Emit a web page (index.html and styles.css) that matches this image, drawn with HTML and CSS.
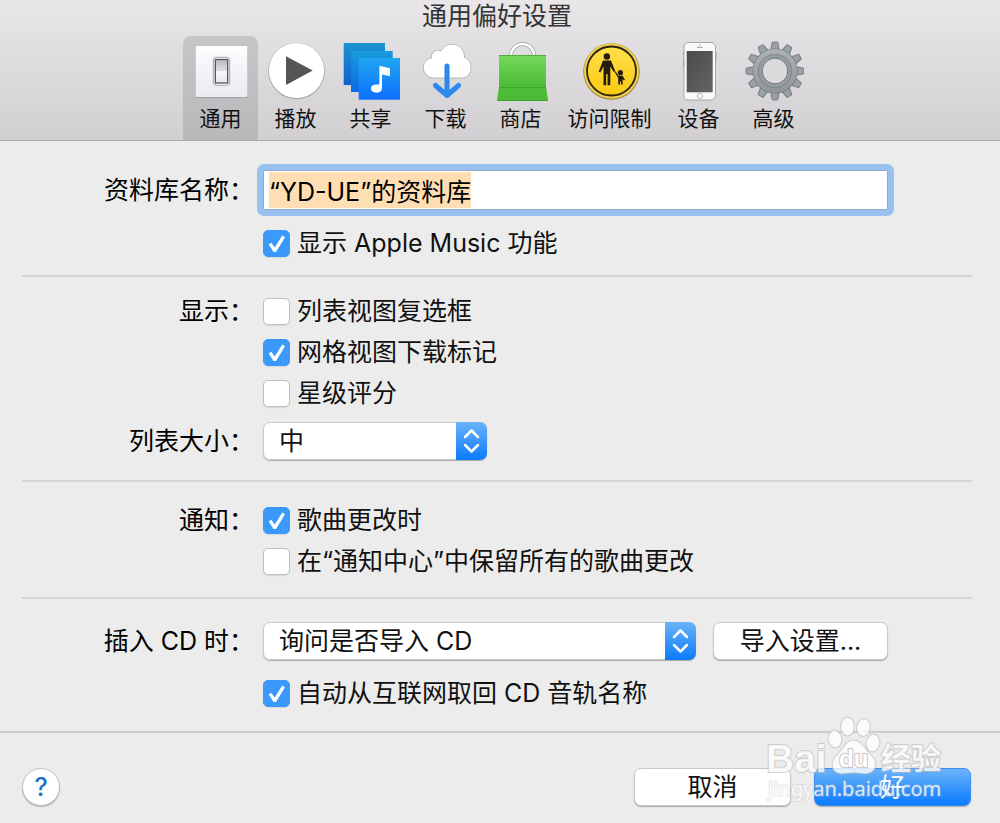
FILE: index.html
```html
<!DOCTYPE html>
<html lang="zh-CN">
<head>
<meta charset="utf-8">
<meta name="viewport" content="width=device-width, initial-scale=1">
<title>通用偏好设置</title>
<link rel="stylesheet" href="styles.css">
</head>
<body>
<header class="titlebar">
  <h1 class="title">通用偏好设置</h1>
  <nav class="tabs" aria-label="偏好设置">
    <button type="button" class="tab tab-active" aria-current="page">
      <svg class="tab-icon" viewBox="0 0 60 60" aria-hidden="true">
        <defs>
          <linearGradient id="plate" x1="0" y1="0" x2="0" y2="1"><stop offset="0" stop-color="#fdfdff"/><stop offset="1" stop-color="#e9ebf0"/></linearGradient>
          <linearGradient id="rocker" x1="0" y1="0" x2="0" y2="1"><stop offset="0" stop-color="#b9bbc1"/><stop offset=".48" stop-color="#dddee2"/><stop offset=".52" stop-color="#f8f8fa"/><stop offset="1" stop-color="#e6e7eb"/></linearGradient>
        </defs>
        <rect x="4" y="6" width="53" height="51" rx="1" fill="#8d8c90" opacity=".6"/>
        <rect x="4.500" y="5" width="52" height="51" rx="1" fill="url(#plate)"/>
        <rect x="22.300" y="16.300" width="16.400" height="28" rx="2.500" fill="#fff" stroke="#a4a5a9" stroke-width="1"/>
        <rect x="24.300" y="18.500" width="12.400" height="23.500" fill="url(#rocker)" stroke="#505156" stroke-width="1.300"/>
      </svg>
      <span>通用</span>
    </button>
    <button type="button" class="tab">
      <svg class="tab-icon" viewBox="0 0 60 60" aria-hidden="true">
        <circle cx="30.500" cy="30" r="28.300" fill="#a9a8aa"/>
        <circle cx="30.500" cy="29.500" r="27.600" fill="#fff"/>
        <path d="M20 15.200 46.700 29.600 20 44Z" fill="#555"/>
      </svg>
      <span>播放</span>
    </button>
    <button type="button" class="tab">
      <svg class="tab-icon" viewBox="0 0 60 60" aria-hidden="true">
        <defs>
          <linearGradient id="share1" x1="0" y1="0" x2="0" y2="1"><stop offset="0" stop-color="#1c93d3"/><stop offset="1" stop-color="#0e62cf"/></linearGradient>
          <linearGradient id="share2" x1="0" y1="0" x2="0" y2="1"><stop offset="0" stop-color="#1b9ade"/><stop offset="1" stop-color="#0c6be2"/></linearGradient>
          <linearGradient id="share3" x1="0" y1="0" x2="0" y2="1"><stop offset="0" stop-color="#20a6f2"/><stop offset="1" stop-color="#0d6ffb"/></linearGradient>
        </defs>
        <rect x="2.700" y="2" width="41.300" height="42" fill="url(#share1)"/>
        <rect x="10" y="10" width="41.700" height="41" fill="url(#share2)"/>
        <rect x="17.700" y="17" width="41.300" height="41.700" fill="url(#share3)"/>
        <path d="M38.400 25.300Q38.500 24.800 39.200 24.900L48 27Q49 27.200 49 28V34.200Q49 35.200 48 35L41 33.500V47C41 51 37.500 52 34.500 51.600C31.500 51.200 30 49.500 30 47.500C30 44.500 33 43.200 38.400 43.600Z" fill="#fff"/>
      </svg>
      <span>共享</span>
    </button>
    <button type="button" class="tab">
      <svg class="tab-icon" viewBox="0 0 60 60" aria-hidden="true">
        <path d="M17 37A10.500 10.500 0 0 1 7.300 27C7.300 21 11 17.500 15.500 17C14.500 11.500 20 7.800 25 10C28 5 32 3.200 36.500 3.300C44 3.500 48.500 9 48.500 16.500C52.500 18 55 21.500 55 26.500C55 33 51 37 46 37Z" fill="#fff" stroke="#aaa9ac" stroke-width=".8"/>
        <path d="M31 25V53M19.500 44.500 31 54.500 42.500 44.500" fill="none" stroke="#2d88ee" stroke-width="5" stroke-linecap="round" stroke-linejoin="round"/>
      </svg>
      <span>下载</span>
    </button>
    <button type="button" class="tab">
      <svg class="tab-icon" viewBox="0 0 60 60" aria-hidden="true">
        <defs>
          <linearGradient id="bag" x1="0" y1="0" x2="0" y2="1"><stop offset="0" stop-color="#74d95c"/><stop offset="1" stop-color="#4bbc34"/></linearGradient>
        </defs>
        <g transform="translate(1 0)">
          <path d="M19 15V14.500A11.500 11.500 0 0 1 42 14.500V15" fill="none" stroke="#9b9b9c" stroke-width="4"/>
          <path d="M19 15V14.500A11.500 11.500 0 0 1 42 14.500V15" fill="none" stroke="#fff" stroke-width="2.600"/>
          <path d="M7 14H54V46H7Z" fill="url(#bag)"/>
          <path d="M7 46H54L56 59Q56 60 55 60H6Q5 60 5 59Z" fill="#4dbb37"/>
          <path d="M7 14.500H54" stroke="#4fac3c" stroke-width="1"/>
          <path d="M7 46.500H54M5.500 59.500H55.500" stroke="#3da42b" stroke-width="1"/>
        </g>
      </svg>
      <span>商店</span>
    </button>
    <button type="button" class="tab tab-wide">
      <svg class="tab-icon" viewBox="0 0 60 60" aria-hidden="true">
        <defs>
          <linearGradient id="sign" x1="0" y1="0" x2="0" y2="1"><stop offset="0" stop-color="#ffe04a"/><stop offset="1" stop-color="#fbc911"/></linearGradient>
        </defs>
        <g transform="translate(1 0)">
          <circle cx="30.500" cy="30.500" r="28.300" fill="#a48e3c"/>
          <circle cx="30.500" cy="30" r="27.500" fill="#f0cf52"/>
          <circle cx="30.500" cy="30" r="24.500" fill="url(#sign)" stroke="#2b2412" stroke-width="1.800"/>
          <g fill="#231d10">
            <circle cx="25.900" cy="15.500" r="3.200"/>
            <path d="M22 19.500H30L34.200 30 32.800 31 29.300 25.500V44.300H26.600V33H25.200V44.300H22.500V25.500L19.300 31.500 17.700 30.800Z"/>
            <circle cx="39.400" cy="31.700" r="2.600"/>
            <path d="M34.400 30.200 37.500 34.700H41.600L44 38.800 43 39.400 41.600 38V43.500H39.900V40.500H38.900V43.500H37.200V37L33.600 31Z"/>
          </g>
        </g>
      </svg>
      <span>访问限制</span>
    </button>
    <button type="button" class="tab">
      <svg class="tab-icon" viewBox="0 0 60 60" aria-hidden="true">
        <defs>
          <linearGradient id="screen" x1="0" y1="0" x2="1" y2="1"><stop offset="0" stop-color="#4b4b4d"/><stop offset="1" stop-color="#646466"/></linearGradient>
        </defs>
        <path d="M14.500 11V14M14.500 18V25M47 11V20" stroke="#99999b" stroke-width="1"/>
        <rect x="15" y="1.500" width="31.500" height="57.500" rx="4.500" fill="#fafafb" stroke="#a5a4a7" stroke-width="1"/>
        <rect x="17.700" y="10" width="26" height="41.300" fill="url(#screen)"/>
        <path d="M28 6.300H33.500" stroke="#99999b" stroke-width="1"/>
        <circle cx="30.800" cy="3.900" r=".6" fill="#88888a"/>
        <circle cx="30.800" cy="55" r="2.600" fill="#fff" stroke="#aaa9ac" stroke-width=".9"/>
      </svg>
      <span>设备</span>
    </button>
    <button type="button" class="tab">
      <svg class="tab-icon" viewBox="0 0 60 60" aria-hidden="true">
        <defs>
          <linearGradient id="steel" gradientUnits="userSpaceOnUse" x1="0" y1="-29" x2="0" y2="29"><stop offset="0" stop-color="#b0b7ba"/><stop offset="1" stop-color="#8b9093"/></linearGradient>
          <path id="tooth" d="M-4.200-21 -2.900-28.200Q-2.800-28.900-2.200-28.900H2.200Q2.800-28.900 2.900-28.200L4.200-21Z"/>
          <g id="teeth">
            <use href="#tooth"/><use href="#tooth" transform="rotate(30)"/><use href="#tooth" transform="rotate(60)"/><use href="#tooth" transform="rotate(90)"/><use href="#tooth" transform="rotate(120)"/><use href="#tooth" transform="rotate(150)"/><use href="#tooth" transform="rotate(180)"/><use href="#tooth" transform="rotate(210)"/><use href="#tooth" transform="rotate(240)"/><use href="#tooth" transform="rotate(270)"/><use href="#tooth" transform="rotate(300)"/><use href="#tooth" transform="rotate(330)"/>
          </g>
        </defs>
        <g transform="translate(31 30)">
          <use href="#teeth" fill="#9ba2a5" stroke="#737a7e" stroke-width="1"/>
          <circle r="18" fill="none" stroke="#737a7e" stroke-width="9"/>
          <circle r="17.700" fill="none" stroke="url(#steel)" stroke-width="8.400"/>
          <circle r="14.800" fill="none" stroke="#959ca0" stroke-width="3.600"/>
          <circle r="16.700" fill="none" stroke="#7b8286" stroke-width=".8"/>
          <circle r="12.800" fill="#dcdadd" stroke="#70777b" stroke-width="1"/>
        </g>
      </svg>
      <span>高级</span>
    </button>
  </nav>
</header>

<form class="window">
  <main class="sections">
    <section class="section section-library">
      <label class="label" for="library">资料库名称：</label>
      <div class="field"><input class="text-input" id="library" type="text" value="“YD-UE”的资料库" autofocus></div>
      <label class="option"><input class="check" type="checkbox" checked>显示 Apple Music 功能</label>
    </section>

    <section class="section section-view">
      <span class="label">显示：</span>
      <div class="options">
        <label class="option"><input class="check" type="checkbox">列表视图复选框</label>
        <label class="option"><input class="check" type="checkbox" checked>网格视图下载标记</label>
        <label class="option"><input class="check" type="checkbox">星级评分</label>
      </div>
      <label class="label label-popup" for="size">列表大小：</label>
      <div class="field">
        <span class="popup popup-small">
          <select class="select" id="size"><option>小</option><option selected>中</option><option>大</option></select>
          <svg class="popup-cap" viewBox="0 0 31 38" aria-hidden="true"><path d="M9 15 15.500 8.500 22 15M9 23 15.500 29.500 22 23"/></svg>
        </span>
      </div>
    </section>

    <section class="section section-notify">
      <span class="label">通知：</span>
      <div class="options">
        <label class="option"><input class="check" type="checkbox" checked>歌曲更改时</label>
        <label class="option"><input class="check" type="checkbox">在“通知中心”中保留所有的歌曲更改</label>
      </div>
    </section>

    <section class="section section-cd">
      <label class="label label-popup" for="cd">插入 CD 时：</label>
      <div class="field">
        <span class="popup">
          <select class="select" id="cd"><option>询问是否导入 CD</option><option>导入 CD</option></select>
          <svg class="popup-cap" viewBox="0 0 31 38" aria-hidden="true"><path d="M9 15 15.500 8.500 22 15M9 23 15.500 29.500 22 23"/></svg>
        </span>
        <button type="button" class="button button-import">导入设置...</button>
      </div>
      <label class="option"><input class="check" type="checkbox" checked>自动从互联网取回 CD 音轨名称</label>
    </section>
  </main>

  <footer class="footer">
    <button type="button" class="help" aria-label="帮助">?</button>
    <button type="button" class="button">取消</button>
    <button type="submit" class="button button-primary">好</button>
    <svg class="watermark" viewBox="0 0 190 94" aria-hidden="true">
      <g class="mark">
        <text class="mark-brand" x="6" y="59">Bai</text>
        <ellipse cx="75" cy="26" rx="6.500" ry="8.500" transform="rotate(-8 75 26)"/>
        <ellipse cx="87.500" cy="13.500" rx="6.500" ry="9"/>
        <ellipse cx="103.500" cy="14.500" rx="6.500" ry="8.500" transform="rotate(10 103.500 14.500)"/>
        <ellipse cx="113" cy="30" rx="6.500" ry="8.500" transform="rotate(10 113 30)"/>
        <path d="M93 27.500C99 27.500 103 32 106 36.500C109 41 115.500 45 115.500 51.500C115.500 57 111 60.500 105 60.500C100 60.500 98 59.500 93.500 59.500C89 59.500 87 60.500 82 60.500C76 60.500 72.500 57 72.500 51.500C72.500 45 78 41.500 81.500 37C84.500 33 87 27.500 93 27.500Z"/>
        <text class="mark-cjk" x="121" y="56">经验</text>
        <text class="mark-url" x="8" y="83">jingyan.baidu.com</text>
      </g>
      <text class="mark-du" x="79" y="54">du</text>
    </svg>
  </footer>
</form>
<script src="script.js"></script>
</body>
</html>
```
FILE: styles.css
```css
* {
  box-sizing: border-box;
}

body {
  display: flex;
  flex-direction: column;
  min-height: 100vh;
  margin: 0;
  background: #ececec;
  color: #111;
  font: 25px/40px Inter, "Noto Sans CJK SC", sans-serif;
}

button,
input,
select {
  margin: 0;
  color: inherit;
  font: inherit;
}

.titlebar {
  padding-right: 6px;
  border-bottom: 1px solid #a9a8aa;
  background: linear-gradient(#e8e6e8, #d1cfd2);
}

.title {
  margin: 0;
  color: #333;
  font-size: 25px;
  font-weight: 400;
  line-height: 32px;
  text-align: center;
}

.tabs {
  display: flex;
  justify-content: center;
  margin-top: 4px;
}

.tab {
  display: flex;
  flex-direction: column;
  align-items: center;
  width: 75px;
  padding: 5px 0 6px;
  border: 0;
  border-radius: 8px 8px 0 0;
  background: none;
  font-size: 21px;
  line-height: 30px;
  white-space: nowrap;
  gap: 3px;
}

.tab-wide {
  width: 103px;
}

.tab-active {
  background: linear-gradient(#c7c5c8, #b9b8ba);
}

.tab-icon {
  width: 60px;
  height: 60px;
}

.window {
  display: flex;
  flex: 1;
  flex-direction: column;
}

.sections {
  padding: 0 28px 0 22px;
}

.section {
  display: grid;
  grid-template-columns: 232px minmax(0, 1fr);
  column-gap: 9px;
  padding-right: 84px;
  border-bottom: 2px solid #d5d5d5;
}

.section:last-child {
  border-bottom: 0;
}

.section-library {
  padding-top: 29px;
  padding-bottom: 11px;
  row-gap: 12px;
}

.section-view {
  padding-top: 14px;
  padding-bottom: 20px;
  row-gap: 8px;
}

.section-notify {
  padding-top: 18px;
  padding-bottom: 15px;
}

.section-cd {
  padding-top: 23px;
  padding-bottom: 17px;
  row-gap: 13px;
}

.label {
  color: #000;
  line-height: 41px;
  text-align: right;
  white-space: nowrap;
}

.label-popup {
  line-height: 38px;
}

.field {
  display: flex;
  align-items: flex-start;
  gap: 17px;
}

.option {
  display: flex;
  grid-column: 2;
  align-items: center;
  gap: 7px;
  line-height: 41px;
}

.text-input {
  flex: 1;
  min-width: 0;
  height: 40px;
  padding: 0 5px;
  border: 1px solid #8fa9c9;
  border-radius: 1px;
  outline: 6px solid #98c1f0;
  background: #fff;
  color: #000;
  line-height: 34px;
}

.text-input::selection {
  background: #ffdeb3;
  color: #000;
}

.check {
  width: 27px;
  height: 27px;
  border: 1px solid #bfbfbf;
  border-radius: 5px;
  appearance: none;
  background: #fff;
  box-shadow: 0 1px 1px #d8d8d8;
}

.check:checked {
  border-color: #3b99fc;
  background: #3b99fc;
}

.check:checked::before {
  display: block;
  width: 100%;
  height: 100%;
  background: #fff;
  clip-path: polygon(19% 54%, 29% 47%, 43% 66%, 73% 18%, 84% 25%, 48% 84%, 38% 84%);
  content: "";
}

.popup {
  position: relative;
  display: flex;
  flex: 1;
  height: 38px;
  border-radius: 7px;
  box-shadow: 0 1px 1px #aaa;
}

.popup-small {
  flex: none;
  width: 224px;
}

.select {
  width: 100%;
  padding: 0 40px 0 15px;
  border: 1px solid #c9c9c9;
  border-radius: 7px;
  appearance: none;
  background: #fff;
  line-height: 34px;
}

.popup-cap {
  position: absolute;
  top: 0;
  right: 0;
  width: 31px;
  height: 38px;
  border-radius: 0 7px 7px 0;
  background: linear-gradient(#6bb3f9, #0b7bfe);
  fill: none;
  pointer-events: none;
  stroke: #fff;
  stroke-linecap: round;
  stroke-linejoin: round;
  stroke-width: 2.500px;
}

.button {
  width: 157px;
  height: 38px;
  padding: 0;
  border: 1px solid #c9c9c9;
  border-radius: 7px;
  background: #fff;
  box-shadow: 0 1px 1px #aaa;
  line-height: 34px;
}

.button-import {
  width: 175px;
}

.button-primary {
  border-color: #3b8df0;
  background: linear-gradient(#6bb3f9, #0b7bfe);
  color: #fff;
}

.footer {
  position: relative;
  display: flex;
  flex: 1;
  align-items: flex-start;
  padding: 35px 29px 16px 22px;
  border-top: 2px solid #cdcdcd;
  gap: 23px;
}

.help {
  width: 38px;
  height: 38px;
  margin-right: auto;
  padding: 0;
  border: 1px solid #c4c4c4;
  border-radius: 50%;
  background: #fff;
  box-shadow: 0 1px 1px #aaa;
  color: #1f6fce;
  font-weight: 500;
  line-height: 34px;
}

.watermark {
  position: absolute;
  right: 50px;
  bottom: 16px;
  width: 190px;
  height: 94px;
  pointer-events: none;
}

.mark {
  fill: #fff;
  fill-opacity: .8;
  paint-order: stroke;
  stroke: #b8b8b8;
  stroke-opacity: .6;
  stroke-width: 2px;
}

.mark-brand {
  font: 700 39px "Liberation Sans", sans-serif;
}

.mark-cjk {
  font: 700 30px "Noto Sans CJK SC", sans-serif;
}

.mark-url {
  font: 400 20px "Noto Sans", sans-serif;
  stroke-opacity: .3;
}

.mark-du {
  fill: #fff;
  font: 700 24px "Liberation Sans", sans-serif;
  paint-order: stroke;
  stroke: #c6c6c6;
  stroke-width: 2px;
}
```
FILE: script.js
```js
const library = document.getElementById("library");
library.focus();
library.select();
```
